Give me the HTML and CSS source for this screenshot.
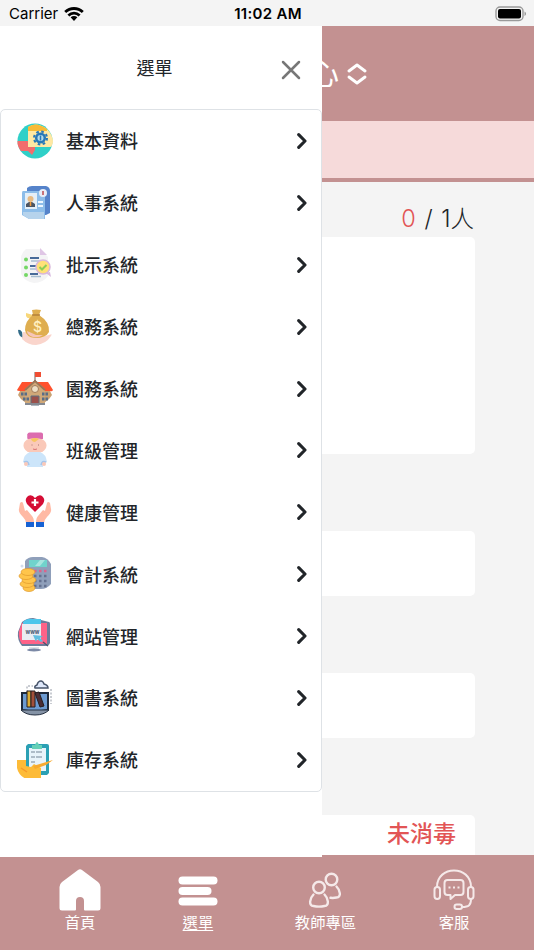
FILE: index.html
```html
<!doctype html>
<html lang="zh-Hant">
  <head>
    <meta charset="UTF-8" />
    <meta name="viewport" content="width=device-width, initial-scale=1.0" />
    <title>選單</title>
    <link rel="stylesheet" href="styles.css">
  </head>
  <body>
    <div class="app">
      <div class="status-bar">
        <div class="carrier">
          <span>Carrier</span>
          <svg width="20" height="16" viewBox="0 0 20 16" fill="none" stroke="#000" stroke-width="2.8">
            <path d="M1.2 6.1c5-4.8 12.6-4.8 17.6 0M4.4 9.4c3.2-3 8-3 11.2 0" />
            <path d="M6.6 11.3c2-1.8 4.8-1.8 6.8 0L10 14.9z" fill="#000" stroke="none" />
          </svg>
        </div>
        <span class="time">11:02 AM</span>
        <svg class="battery" width="32" height="16" viewBox="0 0 32 16">
          <rect x="1" y="1" width="27" height="13.5" rx="4" fill="none" stroke="#999" stroke-width="1.4" />
          <rect x="3" y="3" width="23" height="9.5" rx="2" />
          <path d="M29.5 5.5c2 .8 2 3.7 0 4.5z" fill="#999" />
        </svg>
      </div>

      <header class="header">
        <span class="school">心</span>
        <svg width="20" height="22" viewBox="0 0 20 22" fill="none" stroke="#fff" stroke-width="2.9" stroke-linecap="round" stroke-linejoin="round">
          <path d="M2 8l8-6 8 6M2 14l8 6 8-6" />
        </svg>
      </header>
      <div class="notice"></div>

      <main class="content">
        <div class="count"><span class="red">0</span> / 1人</div>
        <div class="card card-large"></div>
        <div class="card"></div>
        <div class="card"></div>
        <div class="card card-last red">未消毒</div>
      </main>

      <nav class="tabs">
        <a class="tab">
          <svg width="42" height="42" viewBox="0 0 42 42" fill="#fff">
            <path d="M19 1q2-1.500 4 0l16 12q2.500 2 2.500 5v21q0 2.500-2.500 2.500H26q-1 0-1-1V32q0-4-4-4t-4 4v8.500q0 1-1 1H3q-2.500 0-2.500-2.500V18q0-3 2.500-5z" />
          </svg>
          <span>首頁</span>
        </a>
        <a class="tab active">
          <svg width="40" height="42" viewBox="0 0 40 42" fill="#fff">
            <rect x="0.500" y="7.500" width="39" height="8" rx="4" />
            <rect x="0.500" y="18" width="33" height="8" rx="4" />
            <rect x="0.500" y="28.500" width="39" height="8" rx="4" />
          </svg>
          <span>選單</span>
        </a>
        <a class="tab">
          <svg width="34" height="42" viewBox="0 0 34 42" fill="none" stroke="#f5e9e9" stroke-width="2.400" stroke-linecap="round">
            <circle cx="11" cy="18.500" r="5.800" />
            <circle cx="23.500" cy="10.500" r="5.800" />
            <path d="M5.500 25.500c-4 4-5 11 0 11.500q5.500 1.200 11 0c5-.5 4-7.500 0-11.500M28.500 17.500c4 4 5 10.500 0 11q-3 .7-6 .3" />
          </svg>
          <span>教師專區</span>
        </a>
        <a class="tab">
          <svg width="42" height="42" viewBox="0 0 42 42" fill="none" stroke="#f5e9e9" stroke-width="2" stroke-linejoin="round">
            <path d="M4 18C4-4 38-4 38 18M38 30c0 6-2 8-9 8" />
            <rect x="1.500" y="18" width="5.500" height="12" rx="2.700" />
            <rect x="35" y="18" width="5.500" height="12" rx="2.700" />
            <rect x="21.500" y="35.500" width="7.500" height="4.500" rx="2.200" />
            <path d="M14.500 11h13q3 0 3 3v9q0 3-3 3H22l-4.500 4v-4h-3q-3 0-3-3v-9q0-3 3-3z" />
            <path d="M15.500 18.500h2M20 18.500h2M24.500 18.500h2" />
          </svg>
          <span>客服</span>
        </a>
      </nav>

      <aside class="drawer">
        <div class="drawer-header">
          <span>選單</span>
          <svg class="close" width="20" height="20" viewBox="0 0 20 20" stroke="#777" stroke-width="2.500" stroke-linecap="round">
            <path d="M2 2l16 16M18 2L2 18" />
          </svg>
        </div>
        <ul class="menu">
          <li>
            <svg class="icon" viewBox="0 0 36 36">
              <circle cx="18" cy="18" r="17.500" fill="#2fd0c8" />
              <path d="M11 4q8-6 19 2 6 6 6 13-1 5-3 5H11z" fill="#ffe8a3" />
              <path d="M11 4q8-6 19 2v2H11z" fill="#f8bb36" />
              <path d="M.5 18H11v6h7v3l-3 5-4-4H4Q0 23 .5 18z" fill="#f26d6d" />
              <circle cx="23.500" cy="15" r="6.500" fill="none" stroke="#2878b8" stroke-width="2" stroke-dasharray="2.600 2.500" />
              <circle cx="23.500" cy="15" r="4.300" fill="#b6dce8" stroke="#2878b8" stroke-width="2.500" />
              <path d="M23.500 12.500v5" stroke="#2878b8" stroke-width="1.500" />
            </svg>
            <span>基本資料</span>
          </li>
          <li>
            <svg class="icon" viewBox="0 0 36 36">
              <path d="M10 3q2-2 5-2h14q4 1 4 5v22l-4 2H10z" fill="#5583ca" />
              <path d="M6 6h18l4 5v23H12l-7-4V8q0-2 1-2z" fill="#8dbde9" />
              <path d="M6 27h21v7H12l-6-4z" fill="#b6d3ec" />
              <rect x="8" y="8" width="12" height="16" fill="#e5eff7" />
              <circle cx="13.500" cy="14" r="3" fill="#e8bb83" />
              <path d="M9 22v-3l3-2h3l3 2v3z" fill="#4b5564" />
              <path d="M13.500 17v4" stroke="#f29a38" stroke-width="1.500" />
              <path d="M21 17h5M21 21h5" stroke="#eef7ff" stroke-width="2" />
              <circle cx="26" cy="8" r="4" fill="#e7edf7" />
              <path d="M26 6v4" stroke="#bc4b51" stroke-width="1.500" />
            </svg>
            <span>人事系統</span>
          </li>
          <li>
            <svg class="icon" viewBox="0 0 36 36">
              <path d="M9 2h14l8 8v19q-5 7-14 7-9-1-13-9V10q1-5 5-8z" fill="#f4f4f5" />
              <path d="M23 1l7 7h-7z" fill="#dfc6e5" />
              <g fill="#74d765"><circle cx="9" cy="12.500" r="2" /><circle cx="9" cy="20.500" r="2" /><circle cx="9" cy="28" r="2" /></g>
              <path d="M13 11h9M13 19h6M13 27h8" stroke="#496b99" stroke-width="2.200" />
              <path d="M14 14h11M13 22h6M14 29.500h10" stroke="#a9bfd2" stroke-width="1.500" />
              <path d="M29 26l5 4-1-5z" fill="#d7b9df" />
              <circle cx="26" cy="20" r="7" fill="#ffe177" stroke="#d9b7db" stroke-width="1.500" />
              <path d="M22.500 20l2.500 2.500 4.500-4.500" fill="none" stroke="#8ace57" stroke-width="2" />
            </svg>
            <span>批示系統</span>
          </li>
          <li>
            <svg class="icon" viewBox="0 0 36 36">
              <path d="M1 21q2-1 4 2l1 6-3-2q-2-3-2-6z" fill="#326b88" />
              <path d="M6 23q8 0 13 4 7 1 13-1 4-2 2 1-5 8-15 9-8 0-14-6z" fill="#fad5cc" />
              <path d="M9 4l7 2-2 3q-4 1-5-2z" fill="#f8d779" />
              <path d="M15 1q4-1 9 0l-2 5q11 7 10 17-3 6-14 6-9-1-10-8 0-9 8-15z" fill="#dfae50" />
              <path d="M10 22q5 2 9 4h7q-4 3-10 2-6-2-6-6z" fill="#f7c5b7" />
              <path d="M15 6h8" stroke="#b48138" stroke-width="1.500" />
              <text x="16" y="23" class="coin">$</text>
            </svg>
            <span>總務系統</span>
          </li>
          <li>
            <svg class="icon" viewBox="0 0 36 36">
              <path d="M4 18h28l3 6q-5 9-17 10Q6 33 1 24z" fill="#c9a273" />
              <path d="M5 11h26l5 8q-1 2-3 1H3q-3 0-3-1z" fill="#ff522e" />
              <path d="M18 9l10 9v16H8V18z" fill="#d0a878" />
              <path d="M8 19l10-9 10 9" fill="none" stroke="#9c7455" stroke-width="2" />
              <circle cx="18" cy="18" r="3.500" fill="#eddfc6" stroke="#a37b59" />
              <path d="M18 10V1" stroke="#6f5a56" stroke-width="1" />
              <path d="M18 1h6v5h-6z" fill="#f04e34" />
              <path d="M14 25h8v9h-8z" fill="#9b504b" stroke="#5e7182" stroke-width="1" />
              <path d="M4 23h7M25 23h7M6 28h6M25 28h6" stroke="#596d87" stroke-width="3" stroke-dasharray="2.500 1" />
              <path d="M8 33h20" stroke="#858991" stroke-width="2" />
            </svg>
            <span>園務系統</span>
          </li>
          <li>
            <svg class="icon" viewBox="0 0 36 36">
              <rect x="10.500" y="0.500" width="15.500" height="7" rx="2" fill="#dc6daf" />
              <ellipse cx="18" cy="13.500" rx="11.500" ry="8" fill="#fac9b9" />
              <path d="M10.500 2q4-2 7.500 1 4-3 8-1v5l-8-1-7.500 1z" fill="#dc6daf" />
              <path d="M14 7q4-2 8 0l-4 3q-3 0-4-3z" fill="#f8c661" />
              <path d="M14.500 13h1M21 13h1" stroke="#a97573" />
              <path d="M16 17q2 1 4 0" stroke="#d97575" fill="none" />
              <path d="M13 20h10q6 2 7 10l-4 3v2H10v-2l-4-3q1-8 7-10z" fill="#cce5fa" />
              <path d="M7 30q4-2 5 3M29 30q-4-2-5 3" fill="none" stroke="#a6c5ea" stroke-width="1.500" />
              <circle cx="9" cy="32" r="2" fill="#f9c8b9" /><circle cx="27" cy="32" r="2" fill="#f9c8b9" />
            </svg>
            <span>班級管理</span>
          </li>
          <li>
            <svg class="icon" viewBox="0 0 36 36">
              <path d="M18 18L10 10Q7 5 11 2q4-2 7 2 4-4 7-2 4 3 1 8z" fill="#d50d35" />
              <path d="M18 5v7M14.500 8.500h7" stroke="#fff" stroke-width="2.200" />
              <path d="M3 9q2-2 3 0l2 8 2-1 5 6q2 2 2 7H9q0-3-3-6-5-5-4-8zM33 9q-2-2-3 0l-2 8-2-1-5 6q-2 2-2 7h8q0-3 3-6 5-5 4-8z" fill="#ffb9a4" />
              <path d="M9 28h8v5H9zM19 28h8v5h-8z" fill="#1762d4" />
            </svg>
            <span>健康管理</span>
          </li>
          <li>
            <svg class="icon" viewBox="0 0 36 36">
              <path d="M8 5q3-4 8-4h9q6 1 9 7v20q-4 5-10 5H8z" fill="#8f9fba" />
              <path d="M12 4h18v7H12z" fill="#70d3cc" />
              <path d="M18 10l5-6h5l-5 6z" fill="#a8e5df" />
              <g fill="none" stroke-width="2.500" stroke-dasharray="2.500 2.500"><path d="M17 15h15" stroke="#dc638b" /><path d="M17 20h15M17 25h15M17 30h13" stroke="#64718f" /></g>
              <g fill="#ffc54b" stroke="#df9a2d" stroke-width=".7"><ellipse cx="12" cy="32" rx="6" ry="3.500" /><ellipse cx="10" cy="28" rx="7" ry="3.500" /><ellipse cx="12" cy="24" rx="7" ry="3.500" /><ellipse cx="9" cy="20" rx="7" ry="3.500" /><ellipse cx="11" cy="16" rx="7" ry="3.500" /></g>
              <circle cx="5" cy="10" r="1.500" fill="#d4ddeb" />
            </svg>
            <span>會計系統</span>
          </li>
          <li>
            <svg class="icon" viewBox="0 0 36 36">
              <path d="M5 4q5-4 11-4l16 4q1 0 1 2v19q-1 3-5 3H5q-5-6-4-14z" fill="#6d7c9b" />
              <path d="M5 5h25v21H5q-4-6-3-13z" fill="#ff6288" />
              <path d="M6 4q4-4 10-3h8v5H6z" fill="#4dc6eb" />
              <path d="M5 6h19v16H5z" fill="#e9edf3" />
              <text x="8.500" y="16" class="www">www</text>
              <path d="M16 17l10 1-3 2 3 3-2 1-4-3-1 3z" fill="#61bee0" />
              <path d="M26 24l5 4" stroke="#485870" stroke-width="1.500" />
              <path d="M12 29h10v3H12z" fill="#dfe3ea" /><ellipse cx="17" cy="32" rx="7" ry="1.500" fill="#7c89a6" />
            </svg>
            <span>網站管理</span>
          </li>
          <li>
            <svg class="icon" viewBox="0 0 36 36">
              <path d="M18 8q-1-2 2-3 1-4 4-4 2 0 3 3 4 1 4 4z" fill="#dfe8fa" stroke="#47546a" stroke-width="1.500" />
              <path d="M10 12V6h6M34 9v15" fill="none" stroke="#9298a4" stroke-dasharray="2 1.500" />
              <path d="M5 13h26v17q-13 3-26 0z" fill="#6c9bd2" stroke="#1e2a3b" stroke-width="2" />
              <g stroke="#271f21"><path d="M10 11h4v16h-4z" fill="#ddad33" /><path d="M14 11h4v16h-4z" fill="#a2503a" /><path d="M18 13l4-1 5 14-4 1z" fill="#4b2d35" /></g>
              <path d="M4 30h28q-5 5-14 5T4 30z" fill="#8593a6" stroke="#273243" />
            </svg>
            <span>圖書系統</span>
          </li>
          <li>
            <svg class="icon" viewBox="0 0 36 36">
              <path d="M11 2h19q2 0 2 2v27l-2 2H9V4z" fill="#2ba0b4" />
              <path d="M12 6h17v23H12z" fill="#e8f3fa" />
              <path d="M15 3h3q2-6 4 0h3v4H15z" fill="#65d0b7" />
              <path d="M14 10h4M14 15h4M14 20h4M19 10h6M19 15h6" stroke="#9babb8" stroke-width="1.500" />
              <path d="M0 18h9v6l5 1 3-3 7 4v12H12Q2 35 0 26z" fill="#fdbb38" />
              <path d="M4 26l6 4" fill="none" stroke="#f59829" stroke-width="1.300" />
              <path d="M16 24l20-6-7 5-11 4z" fill="#f7aa2f" />
            </svg>
            <span>庫存系統</span>
          </li>
        </ul>
      </aside>
    </div>

    <script>
      // every menu row gets the same chevron
      document.querySelectorAll('.menu li').forEach(function (row) {
        row.insertAdjacentHTML('beforeend', '<svg class="arrow" viewBox="0 0 10 16"><path d="M1.700 1.700L8 8l-6.300 6.300" /></svg>');
      });
    </script>
  </body>
</html>
```

FILE: styles.css
```css
* {
  box-sizing: border-box;
}
body {
  margin: 0;
  font-family: Inter, 'Noto Sans CJK TC', sans-serif;
  color: #212529;
}
.app {
  position: relative;
  display: flex;
  flex-direction: column;
  height: 950px;
  overflow: hidden;
  background-color: #f4f4f4;
}
.status-bar {
  display: grid;
  grid-template-columns: 1fr auto 1fr;
  align-items: center;
  flex: none;
  height: 26px;
  padding: 1px 7px 0 9px;
  color: #000;
  font-size: 15px;
  line-height: 20px;
}
.carrier {
  display: flex;
  align-items: center;
  gap: 6px;
}
.time {
  font-weight: 600;
  letter-spacing: 0.3px;
}
.battery {
  justify-self: end;
}
.header {
  display: flex;
  align-items: center;
  flex: none;
  gap: 8px;
  height: 95px;
  padding-left: 309px;
  background-color: #c39191;
}
.school {
  padding-bottom: 2px;
  color: #fff;
  font-size: 30px;
  font-weight: 400;
  line-height: 36px;
}
.notice {
  flex: none;
  height: 61px;
  background-color: #f6dada;
  border-bottom: 4px solid #c39191;
}
.content {
  flex: 1;
  min-height: 0;
  padding: 20px 59px 0;
  overflow: hidden;
}
.count {
  height: 35px;
  padding-right: 1px;
  font-size: 23.5px;
  font-weight: 300;
  line-height: 33px;
  text-align: right;
  word-spacing: 2px;
}
.red {
  color: #e25555;
}
.card {
  height: 65px;
  margin-bottom: 77px;
  background-color: #fff;
  border-radius: 5px;
}
.card-large {
  height: 217px;
}
.card-last {
  padding-right: 19px;
  font-size: 23px;
  font-weight: 500;
  line-height: 38px;
  text-align: right;
}
.tabs {
  display: flex;
  justify-content: space-between;
  flex: none;
  height: 95px;
  padding: 14px 59px 0;
  background-color: #c39191;
}
.tab {
  display: flex;
  flex-direction: column;
  align-items: center;
  color: #fff;
  font-size: 15.3px;
  line-height: 23px;
}
.active span {
  text-decoration: underline;
  text-underline-offset: 2px;
  text-decoration-thickness: 1px;
}
.drawer {
  position: absolute;
  top: 26px;
  left: 0;
  width: 322px;
  height: 831px;
  background-color: #fff;
}
.drawer-header {
  display: grid;
  grid-template-columns: 1fr auto 1fr;
  align-items: center;
  height: 83px;
  padding: 0 21px 0 8px;
  font-size: 18px;
}
.drawer-header span {
  grid-column: 2;
  padding-bottom: 2px;
}
.close {
  justify-self: end;
  margin-top: 5px;
}
.menu {
  height: 683px;
  margin: 0;
  padding: 0;
  border: 1px solid #dee2e6;
  border-radius: 5px;
  list-style: none;
}
.menu li {
  display: flex;
  align-items: center;
  height: 61.9px;
  padding: 0 14px 0 16px;
  font-size: 18px;
  font-weight: 500;
}
.menu span {
  padding-bottom: 1px;
}
.icon {
  width: 36px;
  height: 36px;
  margin-right: 13px;
}
.arrow {
  width: 10px;
  height: 16px;
  margin-left: auto;
  fill: none;
  stroke: #212529;
  stroke-width: 3.1;
  stroke-linecap: round;
  stroke-linejoin: round;
}
.coin {
  fill: #fff0c2;
  font-size: 14px;
}
.www {
  fill: #485870;
  font-size: 5.5px;
  font-weight: 700;
}
```
